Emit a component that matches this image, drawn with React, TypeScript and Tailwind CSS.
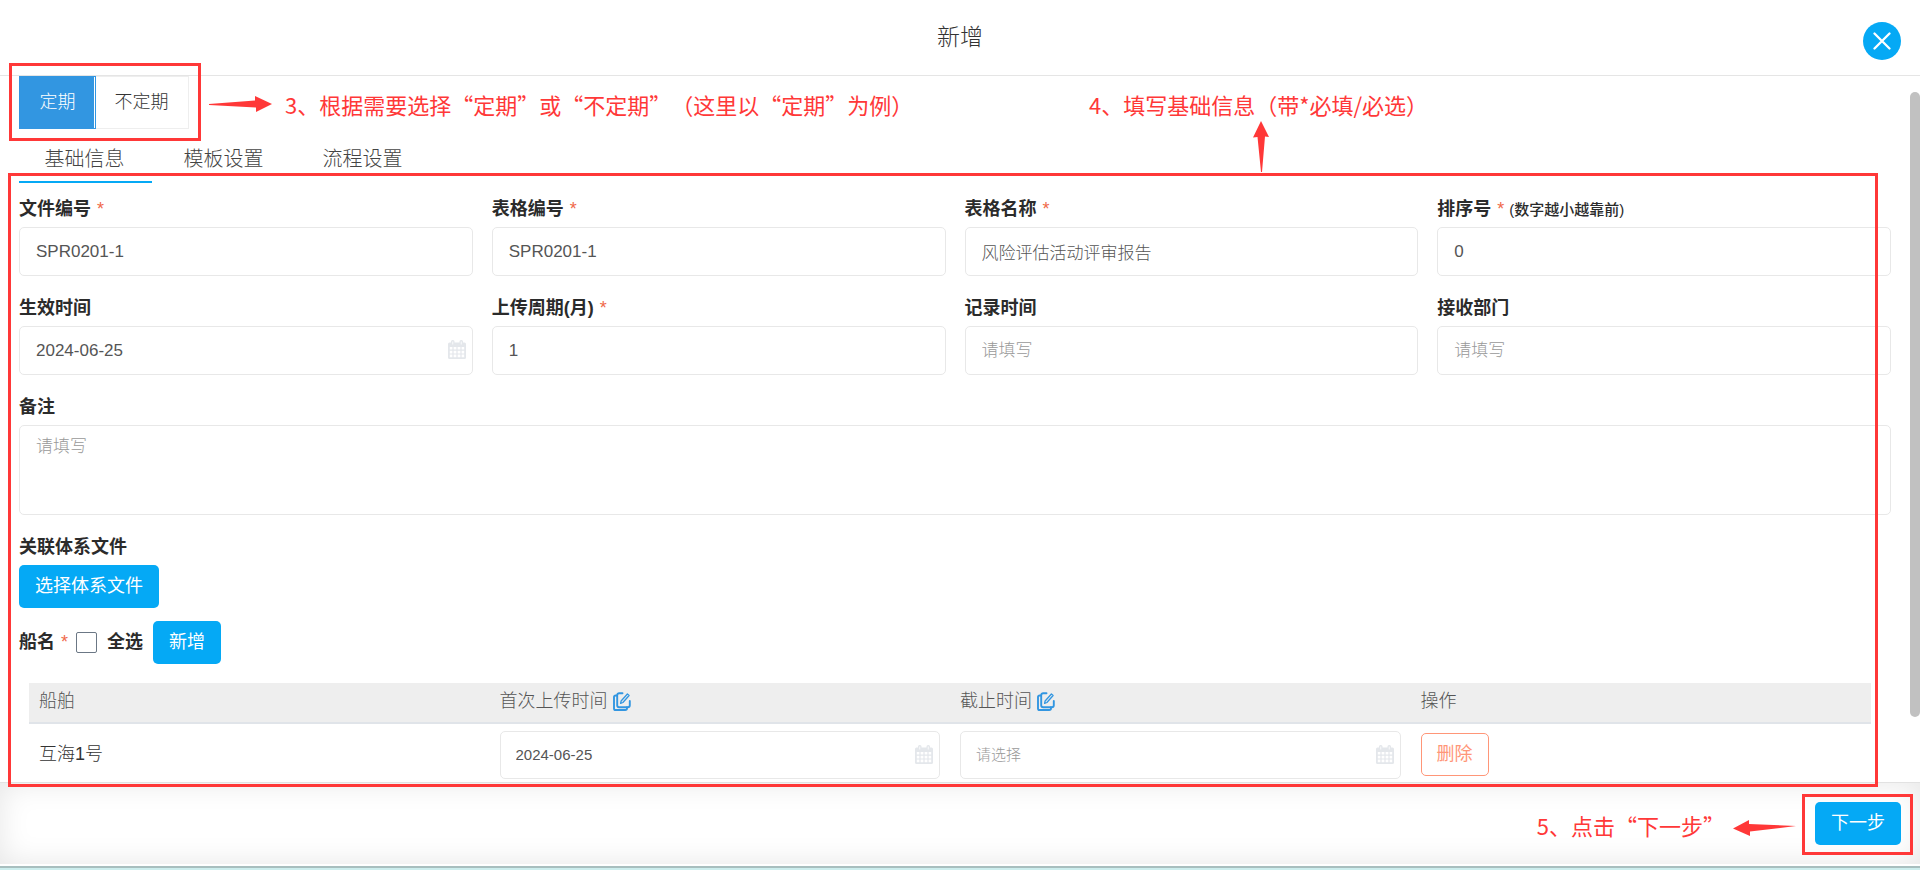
import { useState } from 'react'
import type { ReactNode } from 'react'

const TABS = ['基础信息', '模板设置', '流程设置']

const inputClass =
  'w-full rounded-[5px] border border-[#e8e8e8] bg-transparent text-[#555] placeholder:text-[#999] outline-none'

const labelClass = 'mb-[5px] block h-[26px] text-[18px] leading-[26px] font-bold text-[#2b2b2b]'

function CalendarIcon() {
  return (
    <svg viewBox="0 0 18 19" className="h-[19px] w-[18px]" fill="#e4e7eb" aria-hidden="true">
      <path
        fillRule="evenodd"
        d="M1.500 2.500H3V1.500a1.500 1.500 0 0 1 1.500-1.500h.5A1.500 1.500 0 0 1 6.500 1.500v1h5v-1A1.500 1.500 0 0 1 13 0h.5A1.500 1.500 0 0 1 15 1.500v1h1.500A1.500 1.500 0 0 1 18 4v13.500a1.500 1.500 0 0 1-1.500 1.500h-15A1.500 1.500 0 0 1 0 17.500V4a1.500 1.500 0 0 1 1.500-1.500zM4.400 1.600v3h.8v-3zM12.800 1.600v3h.8v-3zM1.800 7v2.600h2.600V7zM5.600 7v2.600h2.800V7zM9.600 7v2.600h2.800V7zM13.600 7v2.600h2.600V7zM1.800 10.800v2.600h2.600v-2.600zM5.600 10.800v2.600h2.800v-2.600zM9.600 10.800v2.600h2.800v-2.600zM13.600 10.800v2.600h2.600v-2.600zM1.800 14.600v2.600h2.600v-2.600zM5.600 14.600v2.600h2.800v-2.600zM9.600 14.600v2.600h2.800v-2.600zM13.600 14.600v2.600h2.600v-2.600z"
      />
    </svg>
  )
}

function EditIcon() {
  return (
    <svg
      viewBox="0 0 18 19"
      className="h-[19px] w-[18px]"
      fill="none"
      stroke="#3296e1"
      strokeLinecap="round"
      strokeLinejoin="round"
      aria-hidden="true"
    >
      <path d="M9.500 1.200H6.200a2 2 0 0 0-2 2v10.100a2 2 0 0 0 2 2h8.600a2 2 0 0 0 2-2V9" strokeWidth="1.900" />
      <path d="M3.800 3.500H2.600A1.600 1.600 0 0 0 1 5.100v11.300a1.600 1.600 0 0 0 1.600 1.600h9.600a1.800 1.800 0 0 0 1.800-1.800v-.9" strokeWidth="1.900" />
      <path d="M14.400 2l1.700 1.500-6.200 7-2.300.9.500-2.400z" strokeWidth="1.300" />
    </svg>
  )
}

function PrimaryButton({ children }: { children: ReactNode }) {
  return (
    <button type="button" className="h-[43px] rounded-[5px] bg-[#05a9f5] px-4 pb-px text-[18px] font-normal text-white">
      {children}
    </button>
  )
}

type FieldProps = {
  id: string
  label: string
  value?: string
  required?: boolean
  hint?: string
  date?: boolean
}

function Field({ id, label, value, required, hint, date }: FieldProps) {
  return (
    <div className="min-w-0">
      <label htmlFor={id} className={labelClass}>
        {label}
        {required && <span className="ml-[6px] font-normal text-[#f0694a]">*</span>}
        {hint && <span className="ml-[5px] text-[15px] font-medium">{hint}</span>}
      </label>
      <div className="relative">
        <input
          id={id}
          defaultValue={value}
          placeholder="请填写"
          className={`${inputClass} block h-[49px] px-4 text-[17px]`}
        />
        {date && (
          <span className="absolute top-[14px] right-[7px]">
            <CalendarIcon />
          </span>
        )}
      </div>
    </div>
  )
}

function DateCell({ label, value }: { label: string; value?: string }) {
  return (
    <div className="relative">
      <input
        aria-label={label}
        defaultValue={value}
        placeholder="请选择"
        className={`${inputClass} block h-12 px-[15px] text-[15px]`}
      />
      <span className="absolute top-[14px] right-[7px]">
        <CalendarIcon />
      </span>
    </div>
  )
}

const noteClass =
  "absolute whitespace-nowrap font-['Noto_Sans_CJK_SC',sans-serif] text-[22px] leading-8 font-normal text-[#ff3838] [text-spacing-trim:space-all]"

export default function App() {
  const [periodic, setPeriodic] = useState(true)
  const [tab, setTab] = useState(0)

  return (
    <div
      lang="zh-CN"
      className="flex h-screen flex-col bg-white font-['Liberation_Sans','Noto_Sans_CJK_SC',sans-serif] font-light text-[#444]"
    >
      <header className="relative flex h-[76px] shrink-0 items-center justify-center border-b border-[#e5e5e5]">
        <h1 className="text-[23px] text-[#333]">新增</h1>
        <button
          type="button"
          aria-label="关闭"
          className="absolute top-[22px] right-[19px] flex size-[38px] items-center justify-center rounded-full bg-[#05a9f5]"
        >
          <svg viewBox="0 0 18 18" className="size-[18px]" stroke="#fff" strokeWidth="2.300" strokeLinecap="round">
            <path d="M1.500 1.500l15 15M16.500 1.500l-15 15" />
          </svg>
        </button>
      </header>

      <main className="relative min-h-0 flex-1">
        <div className="h-full overflow-hidden pr-[29px] pl-[19px]">
          <div className="flex h-[53px]">
            <button
              type="button"
              onClick={() => setPeriodic(true)}
              className={`w-[77px] border text-[18px] ${periodic ? 'border-[#3296e1] bg-[#3296e1] text-white shadow-[inset_-1px_0_0_#fff]' : 'border-[#eee] text-[#333]'}`}
            >
              定期
            </button>
            <button
              type="button"
              onClick={() => setPeriodic(false)}
              className={`w-[93px] border border-l-0 pr-px text-[18px] ${periodic ? 'border-[#eee] text-[#333]' : 'border-[#3296e1] bg-[#3296e1] text-white'}`}
            >
              不定期
            </button>
          </div>

          <nav className="flex h-[54px] gap-[6px]">
            {TABS.map((name, i) => (
              <button
                key={name}
                type="button"
                onClick={() => setTab(i)}
                className={`w-[133px] border-b-2 pt-2 pr-[2px] text-[20px] ${i === tab ? 'border-[#05a9f5]' : 'border-transparent'}`}
              >
                {name}
              </button>
            ))}
          </nav>

          <form className="mt-[13px] flex flex-col gap-[19px]">
            <div className="grid grid-cols-4 gap-[19px]">
              <Field id="file-no" label="文件编号" value="SPR0201-1" required />
              <Field id="form-no" label="表格编号" value="SPR0201-1" required />
              <Field id="form-name" label="表格名称" value="风险评估活动评审报告" required />
              <Field id="sort-no" label="排序号" value="0" required hint="(数字越小越靠前)" />
              <Field id="effective" label="生效时间" value="2024-06-25" date />
              <Field id="cycle" label="上传周期(月)" value="1" required />
              <Field id="record" label="记录时间" />
              <Field id="dept" label="接收部门" />
            </div>

            <div>
              <label htmlFor="remark" className={labelClass}>
                备注
              </label>
              <textarea
                id="remark"
                placeholder="请填写"
                className={`${inputClass} block h-[90px] resize-none px-4 py-[9px] text-[17px] leading-6`}
              />
            </div>

            <div>
              <h2 className={labelClass}>关联体系文件</h2>
              <PrimaryButton>选择体系文件</PrimaryButton>
              <div className="mt-[13px] flex items-center text-[18px] font-bold text-[#2b2b2b]">
                <span>船名</span>
                <span className="ml-[6px] font-normal text-[#f0694a]">*</span>
                <label className="mr-[10px] ml-2 flex items-center gap-[10px]">
                  <input
                    type="checkbox"
                    className="size-[21px] appearance-none rounded-[2px] border border-[#6b7785] checked:bg-[#05a9f5]"
                  />
                  全选
                </label>
                <PrimaryButton>新增</PrimaryButton>
              </div>
            </div>

            <div className="pr-5 pl-[10px]">
              <table className="w-full table-fixed text-left text-[18px]">
                <thead>
                  <tr className="h-10 border-b-2 border-[#e0e4e9] bg-[#eee] text-[#555]">
                    <th className="px-[10px] pb-[2px] font-light">船舶</th>
                    <th className="px-[10px] pb-[2px] font-light">
                      <span className="flex items-center gap-[5px]">
                        首次上传时间
                        <button type="button" aria-label="批量修改首次上传时间">
                          <EditIcon />
                        </button>
                      </span>
                    </th>
                    <th className="px-[10px] pb-[2px] font-light">
                      <span className="flex items-center gap-[5px]">
                        截止时间
                        <button type="button" aria-label="批量修改截止时间">
                          <EditIcon />
                        </button>
                      </span>
                    </th>
                    <th className="px-[10px] pb-[2px] font-light">操作</th>
                  </tr>
                </thead>
                <tbody>
                  <tr className="h-[62px]">
                    <td className="px-[10px] text-[#333]">互海1号</td>
                    <td className="px-[10px]">
                      <DateCell label="首次上传时间" value="2024-06-25" />
                    </td>
                    <td className="px-[10px]">
                      <DateCell label="截止时间" />
                    </td>
                    <td className="px-[10px]">
                      <button
                        type="button"
                        className="block h-[43px] rounded-[5px] border border-[#ff9678] px-[15px] pb-px text-[18px] font-normal text-[#ff9678]"
                      >
                        删除
                      </button>
                    </td>
                  </tr>
                </tbody>
              </table>
            </div>
          </form>
        </div>

        {/* scrollbar thumb */}
        <div className="absolute top-4 right-0 bottom-[65px] w-[10px] rounded-full bg-[#c1c1c1]" />

        {/* step 3 */}
        <div className="absolute -top-[13px] left-[9px] h-[78px] w-[192px] border-3 border-[#ff3838]" />
        <svg viewBox="0 0 63 16" className="absolute top-5 left-[209px] h-4 w-[63px]" fill="#ff3838" aria-hidden="true">
          <path d="M0 8L46 4.500V0L63 8L47 16V11.500L0 9z" />
        </svg>
        <p className={`${noteClass} top-3 left-[285px]`}>3、根据需要选择“定期”或“不定期”（这里以“定期”为例）</p>

        {/* step 4 */}
        <div className="absolute top-[97px] right-[42px] -bottom-[5px] left-2 z-10 border-3 border-[#ff3838]" />
        <svg viewBox="0 0 16 51" className="absolute top-[45px] left-[1253px] h-[51px] w-4" fill="#ff3838" aria-hidden="true">
          <path d="M8 0L16 16L12 15.500L9 51H8L4.500 16L0 16.500z" />
        </svg>
        <p className={`${noteClass} top-3 left-[1089px]`}>4、填写基础信息（带*必填/必选）</p>
      </main>

      <footer className="relative flex h-[82px] shrink-0 justify-end border-t border-[#e2e2e2] pt-[19px] pr-[19px] shadow-[inset_0_0_30px_rgba(0,0,0,0.1)]">
        <PrimaryButton>下一步</PrimaryButton>

        {/* step 5 */}
        <div className="absolute top-[11px] right-[7px] h-[61px] w-[111px] border-3 border-[#ff3838]" />
        <svg viewBox="0 0 63 16" className="absolute top-[37px] right-[124px] h-4 w-[63px]" fill="#ff3838" aria-hidden="true">
          <path d="M0 8.500L16 0V4L63 6L17 11.500V16z" />
        </svg>
        <p className={`${noteClass} top-[26px] right-[195px]`}>5、点击“下一步”</p>
      </footer>
      <div className="mt-[2px] h-1 shrink-0 border-t-2 border-[#a8bfbf] bg-[#cdeeee]" />
    </div>
  )
}
